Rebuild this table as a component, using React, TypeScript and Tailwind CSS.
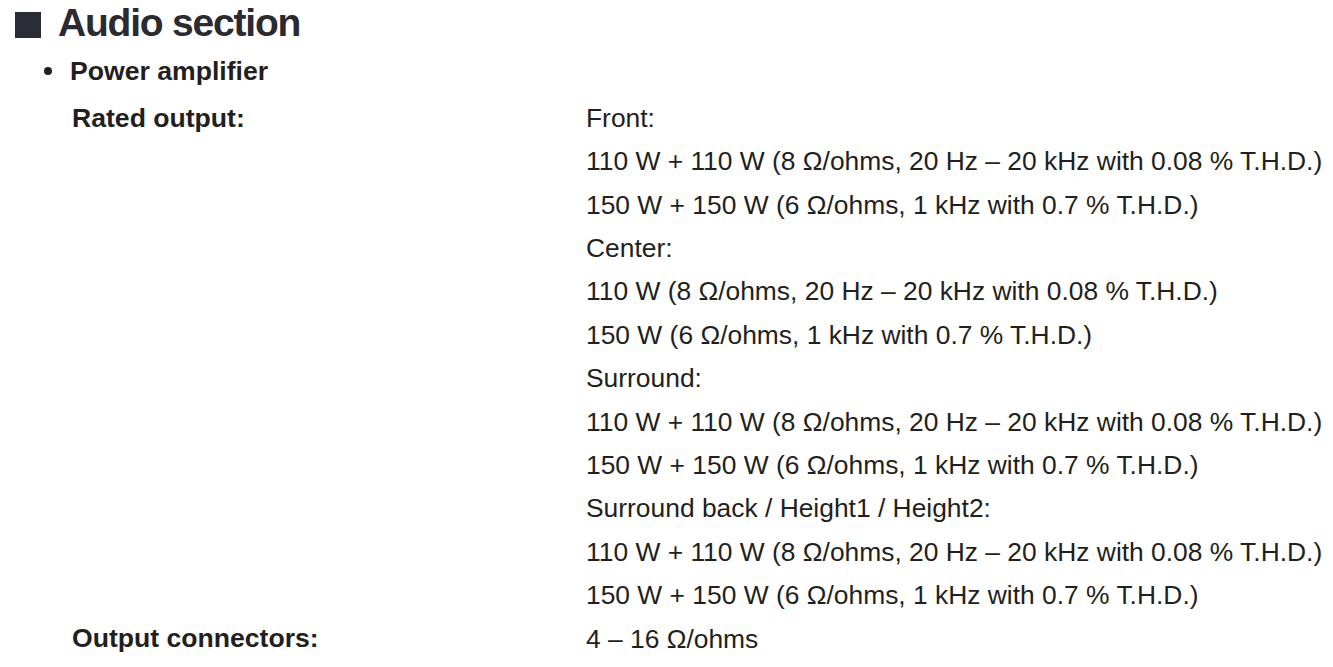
const rows: { label?: string; value: string }[] = [
  { label: "Rated output:", value: "Front:" },
  { value: "110 W + 110 W (8 Ω/ohms, 20 Hz – 20 kHz with 0.08 % T.H.D.)" },
  { value: "150 W + 150 W (6 Ω/ohms, 1 kHz with 0.7 % T.H.D.)" },
  { value: "Center:" },
  { value: "110 W (8 Ω/ohms, 20 Hz – 20 kHz with 0.08 % T.H.D.)" },
  { value: "150 W (6 Ω/ohms, 1 kHz with 0.7 % T.H.D.)" },
  { value: "Surround:" },
  { value: "110 W + 110 W (8 Ω/ohms, 20 Hz – 20 kHz with 0.08 % T.H.D.)" },
  { value: "150 W + 150 W (6 Ω/ohms, 1 kHz with 0.7 % T.H.D.)" },
  { value: "Surround back / Height1 / Height2:" },
  { value: "110 W + 110 W (8 Ω/ohms, 20 Hz – 20 kHz with 0.08 % T.H.D.)" },
  { value: "150 W + 150 W (6 Ω/ohms, 1 kHz with 0.7 % T.H.D.)" },
  { label: "Output connectors:", value: "4 – 16 Ω/ohms" },
];

export default function App() {
  return (
    <div className="min-h-screen bg-white text-[#231f20] font-['Liberation_Sans',Arial,sans-serif]">
      <div className="flex items-center pl-[15px] pt-[1px]">
        <span className="mt-[3px] h-[26px] w-[26px] bg-[#2a2d35]" />
        <h1 className="ml-[17px] text-[39px] font-bold leading-[44px] tracking-[-1.2px] text-[#2a2a30]">
          Audio section
        </h1>
      </div>
      <div className="mt-[10px] flex items-center pl-[44px]">
        <span className="h-[8px] w-[8px] rounded-full bg-[#231f20]" />
        <h2 className="ml-[18px] text-[26.6px] font-bold leading-[32px]">Power amplifier</h2>
      </div>
      <div className="mt-[10px]">
        {rows.map((r, i) => (
          <div key={i} className="flex h-[43.4px] items-center">
            <div className="w-[586px] pl-[72px] text-[26.6px] font-bold">{r.label}</div>
            <div className="text-[26.4px] whitespace-nowrap">{r.value}</div>
          </div>
        ))}
      </div>
    </div>
  );
}
